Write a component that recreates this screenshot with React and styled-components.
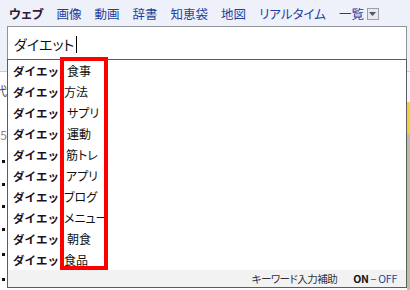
import React from "react";
import styled, { createGlobalStyle } from "styled-components";

const GlobalStyle = createGlobalStyle`
  html, body { margin: 0; padding: 0; background: #fff; }
  body { font-family: "Noto Sans CJK JP", "Noto Sans", sans-serif; }
`;

const Page = styled.div`
  position: relative;
  width: 410px;
  height: 290px;
  overflow: hidden;
  background: #fff;
`;

const Header = styled.div`
  background: #eef1f9;
  height: 72px;
  border-bottom: 1px solid #c9ccd2;
  box-sizing: border-box;
`;

const Tabs = styled.div`
  display: flex;
  align-items: center;
  gap: 13px;
  height: 26px;
  padding: 1px 0 0 9px;
  box-sizing: border-box;
  font-size: 12.5px;
  font-feature-settings: "palt";
`;

const Tab = styled.span`
  color: ${({ $active }) => ($active ? "#2b1d33" : "#1f3f9f")};
  font-weight: ${({ $active }) => ($active ? 700 : 400)};
  display: flex;
  align-items: center;
  gap: 3px;
`;

const MoreBox = styled.span`
  width: 10px;
  height: 10px;
  border: 1px solid #9aa1ad;
  background: #e7e9ee;
  display: flex;
  align-items: center;
  justify-content: center;
`;

const SearchBox = styled.div`
  margin-left: 7px;
  width: 400px;
  height: 34px;
  box-sizing: border-box;
  border: 1px solid #8f9297;
  border-bottom: none;
  background: #fff;
  display: flex;
  align-items: center;
  padding: 1px 0 0 6px;
  font-size: 14px;
  font-feature-settings: "palt";
  color: #111;
`;

const Caret = styled.span`
  width: 1px;
  height: 17px;
  background: #000;
  margin-left: 2px;
`;

const Body = styled.div`
  display: flex;
  height: 218px;
`;

const LeftStrip = styled.div`
  width: 7px;
  overflow: hidden;
  display: flex;
  flex-direction: column;
  font-size: 12px;
  color: #444;
`;

const CutText = styled.span`
  height: ${({ $h }) => $h}px;
  flex-shrink: 0;
  display: flex;
  align-items: center;
  justify-content: flex-end;
  white-space: nowrap;
  color: ${({ $c }) => $c || "#444"};
`;

const Bullet = styled.span`
  width: 3px;
  height: 3px;
  flex-shrink: 0;
  background: #111;
  margin: ${({ $m }) => $m}px 0 0 2px;
`;

const MainArea = styled.div`
  flex: 1;
`;

const RightStrip = styled.div`
  width: 3px;
  display: flex;
  flex-direction: column;
`;

const Block = styled.div`
  height: ${({ $h }) => $h}px;
  background: ${({ $c }) => $c};
`;

const Suggest = styled.div`
  position: absolute;
  left: 7px;
  top: 59px;
  width: 400px;
  box-sizing: border-box;
  border: 1px solid #5c5c5c;
  background: #fff;
`;

const Row = styled.div`
  height: 21px;
  display: flex;
  align-items: center;
  padding-left: 5px;
  white-space: nowrap;
`;

const Query = styled.span`
  width: 51px;
  overflow: hidden;
  font-size: 11.5px;
  font-weight: 700;
  color: #1a1020;
`;

const Tail = styled.span`
  padding-left: ${({ $pad }) => $pad}px;
  font-size: 12px;
  font-feature-settings: "palt";
  color: #111;
`;

const Footer = styled.div`
  height: 17px;
  background: #f2f2f2;
  display: flex;
  align-items: center;
  justify-content: flex-end;
  padding-right: 9px;
  font-size: 10.5px;
  letter-spacing: -0.5px;
  font-feature-settings: "palt";
  color: #333;
`;

const Switch = styled.span`
  margin-left: 16px;
  letter-spacing: -0.2px;
  color: #1f3f9f;
`;

const On = styled.b`
  color: #111;
  letter-spacing: -0.5px;
`;

const RedFrame = styled.div`
  position: absolute;
  left: 60px;
  top: 57px;
  width: 48px;
  height: 213px;
  box-sizing: border-box;
  border: 4px solid #f00;
`;

const tabs = ["画像", "動画", "辞書", "知恵袋", "地図", "リアルタイム"];

const suggestions = [
  ["食事", 3],
  ["方法", 0],
  ["サプリ", 3],
  ["運動", 3],
  ["筋トレ", 2],
  ["アプリ", 2],
  ["ブログ", 0],
  ["メニュー", 0],
  ["朝食", 3],
  ["食品", 0],
];

export default function App() {
  return (
    <Page>
      <GlobalStyle />
      <Header>
        <Tabs>
          <Tab $active>ウェブ</Tab>
          {tabs.map((t) => (
            <Tab key={t}>{t}</Tab>
          ))}
          <Tab>
            一覧
            <MoreBox>
              <svg width="7" height="4" viewBox="0 0 7 4">
                <path d="M0 0 L7 0 L3.5 4 Z" fill="#4a5568" />
              </svg>
            </MoreBox>
          </Tab>
        </Tabs>
        <SearchBox>
          ダイエット
          <Caret />
        </SearchBox>
      </Header>
      <Body>
        <LeftStrip>
          <CutText $h={36}>現代</CutText>
          <CutText $h={52} $c="#888">25</CutText>
          <Bullet $m={0} />
          <Bullet $m={20} />
          <Bullet $m={19} />
          <Bullet $m={20} />
          <Bullet $m={22} />
          <Bullet $m={22} />
        </LeftStrip>
        <MainArea />
        <RightStrip>
          <Block $h={30} $c="#f4f6fb" />
          <Block $h={32} $c="#f3cf3a" />
          <Block $h={156} $c="#b9bfa8" />
        </RightStrip>
      </Body>
      <Suggest>
        {suggestions.map(([tail, pad]) => (
          <Row key={tail}>
            <Query>ダイエット</Query>
            <Tail $pad={pad}>{tail}</Tail>
          </Row>
        ))}
        <Footer>
          キーワード入力補助
          <Switch>
            <On>ON</On> − OFF
          </Switch>
        </Footer>
      </Suggest>
      <RedFrame />
    </Page>
  );
}
